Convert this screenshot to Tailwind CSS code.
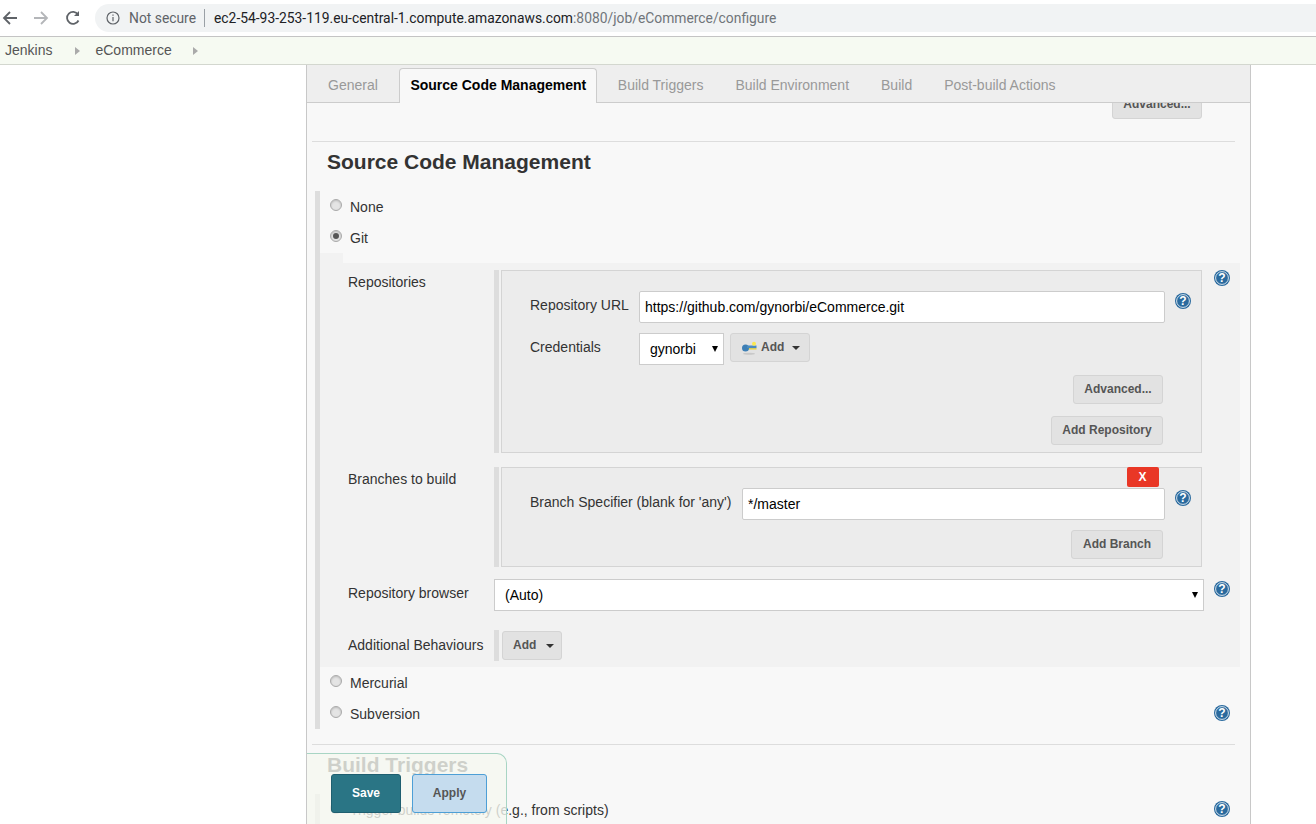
<!DOCTYPE html>
<html lang="en">

<head>
    <meta charset="UTF-8">
    <meta name="viewport" content="width=device-width, initial-scale=1.0">
    <title>eCommerce Config [Jenkins]</title>
    <script src="https://cdn.jsdelivr.net/npm/@tailwindcss/browser@4"></script>
</head>

<body class="h-[824px] overflow-hidden bg-white font-['Liberation_Sans',Arial,sans-serif] text-[14px] text-[#333]">
<!-- browser toolbar -->
<div class="flex h-[37px] items-center border-b border-[#c4c4c4] bg-white">
    <svg class="ml-[2px] h-4 w-4" viewBox="0 0 16 16" fill="none" stroke="#5f6368" stroke-width="1.8"><path d="M15 8H2M8 2L2 8l6 6"/></svg>
    <svg class="ml-[15px] h-4 w-4" viewBox="0 0 16 16" fill="none" stroke="#b4b6b9" stroke-width="1.8"><path d="M1 8h13M8 2l6 6-6 6"/></svg>
    <svg class="ml-[16px] h-4 w-4" viewBox="0 0 16 16" fill="none" stroke="#5f6368" stroke-width="1.8"><path d="M13.5 10.5A6 6 0 1 1 13 4.5"/><path d="M14 1v5H9" fill="#5f6368" stroke="none"/></svg>
    <div class="ml-[14px] flex h-[28px] flex-1 items-center rounded-l-[14px] bg-[#f1f3f4] pl-[11px] font-['Roboto',sans-serif] text-[13.85px]">
        <svg class="h-[14px] w-[14px]" viewBox="0 0 14 14" fill="none" stroke="#5f6368" stroke-width="1.2"><circle cx="7" cy="7" r="6"/><path d="M7 6v4.2M7 3.6v1.2"/></svg>
        <span class="ml-[9px] text-[#5f6368]">Not secure</span>
        <span class="ml-[8px] h-[18px] w-px bg-[#9aa0a6]"></span>
        <span class="ml-[9px] text-[#202124]">ec2-54-93-253-119.eu-central-1.compute.amazonaws.com<span class="text-[#70757a]">:8080/job/eCommerce/configure</span></span>
    </div>
</div>

<!-- breadcrumbs -->
<div class="flex h-[28px] items-center border-b border-[#d3d7cf] bg-[#f6faf2] pl-[5px] text-[#555]">
    <span>Jenkins</span>
    <span class="ml-[23px] h-0 w-0 border-y-[4px] border-l-[5px] border-y-transparent border-l-[#aaa]"></span>
    <span class="ml-[15px]">eCommerce</span>
    <span class="ml-[21px] h-0 w-0 border-y-[4px] border-l-[5px] border-y-transparent border-l-[#aaa]"></span>
</div>

<!-- config panel -->
<div class="relative ml-[306px] h-[759px] w-[945px] overflow-hidden border-x border-[#c8c8c8] bg-[#f8f8f8]">
    <!-- tabs -->
    <div class="relative z-10 flex h-[38px] items-end border-b border-[#ccc] bg-[#eee] text-[#999]">
        <span class="flex h-[34px] items-center px-[21px] pt-px">General</span>
        <span class="-mb-px flex h-[35px] w-[198px] items-center justify-center rounded-t-[4px] border border-b-0 border-[#ccc] bg-[#f8f8f8] pb-[2px] pl-px font-bold text-black">Source Code Management</span>
        <span class="flex h-[34px] items-center pl-[21px] pr-[16px] pt-px">Build Triggers</span>
        <span class="flex h-[34px] items-center px-[16px] pt-px">Build Environment</span>
        <span class="flex h-[34px] items-center px-[16px] pt-px">Build</span>
        <span class="flex h-[34px] items-center px-[16px] pt-px">Post-build Actions</span>
    </div>

    <!-- scrolled content -->
    <div class="pl-[5px] pr-[10px]">
        <div class="-mt-[13px] flex justify-end pr-[38px]">
            <button class="h-[29px] w-[90px] rounded-[3px] border border-[#d4d4d4] bg-[#e2e2e2] pb-[2px] text-[12px] font-bold text-[#555]">Advanced...</button>
        </div>
        <div class="mr-[5px] mt-[22px] border-t border-[#ddd]"></div>
        <h2 class="ml-[15px] mt-[9px] h-[40px] text-[21px] font-bold leading-[21px] text-[#333]">Source Code Management</h2>

        <!-- scm radio block -->
        <div class="ml-[3px] border-l-[5px] border-[#ddd]">
            <div class="flex h-[31px] items-center pl-[10px] pt-[2px]">
                <span class="-mt-[5px] h-[12px] w-[12px] rounded-full border border-[#aaa] bg-[#e4e4e4] shadow-[inset_0_1px_2px_#bbb]"></span>
                <span class="ml-[8px]">None</span>
            </div>
            <div class="flex h-[31px] items-center pl-[10px] pt-[2px]">
                <span class="-mt-[5px] flex h-[12px] w-[12px] items-center justify-center rounded-full border border-[#aaa] bg-[#e4e4e4] shadow-[inset_0_1px_2px_#bbb]"><span class="h-[6px] w-[6px] rounded-full bg-[#555]"></span></span>
                <span class="ml-[8px]">Git</span>
            </div>
            <div class="h-[10px] w-[23px] bg-[#f2f2f2]"></div>

            <!-- git settings -->
            <div class="bg-[#f2f2f2] pb-[6px] pl-[28px] pr-[10px] pt-[7px]">
                <!-- repositories -->
                <div class="flex">
                    <span class="w-[146px] pt-[2px]">Repositories</span>
                    <div class="flex flex-1 items-start">
                        <div class="h-[183px] w-[5px] bg-[#ddd]"></div>
                        <div class="ml-[2px] h-[183px] flex-1 border border-[#d4d4d4] bg-[#ececec] pl-[28px] pr-[10px] pt-[20px]">
                            <div class="flex items-center">
                                <span class="-mt-[4px] w-[109px]">Repository URL</span>
                                <input class="h-[32px] flex-1 rounded-[2px] border border-[#ccc] bg-white pl-[5px] text-black" value="https://github.com/gynorbi/eCommerce.git">
                                <svg class="-mt-[12px] ml-[10px] h-4 w-4" viewBox="0 0 16 16"><circle cx="8" cy="8" r="8" fill="#2a6a9e"/><circle cx="8" cy="8" r="6.4" fill="none" stroke="#fff" stroke-width=".8"/><text x="8" y="12.2" text-anchor="middle" font-size="12" font-weight="bold" fill="#fff" font-family="Liberation Sans">?</text></svg>
                            </div>
                            <div class="mt-[10px] flex items-start">
                                <span class="w-[109px] pt-[4px]">Credentials</span>
                                <div class="relative h-[32px] w-[85px]">
                                    <select class="h-[32px] w-[85px] appearance-none border border-[#ccc] bg-white pl-[10px] text-black"><option>gynorbi</option></select>
                                    <span class="absolute right-[6px] top-[13px] h-0 w-0 border-x-[3.5px] border-t-[6px] border-x-transparent border-t-black"></span>
                                </div>
                                <button class="ml-[6px] flex h-[29px] w-[80px] items-center rounded-[3px] border border-[#d4d4d4] bg-[#e2e2e2] pb-[2px] pl-[11px] text-[12px] font-bold text-[#555]">
                                    <svg class="mt-[2px] h-[14px] w-[15px]" viewBox="0 0 15 14"><ellipse cx="7" cy="12.7" rx="6" ry="1" fill="#c8c8c8"/><path d="M5 7h9.5v1.6H5z" fill="#e8d44d"/><circle cx="3.5" cy="7" r="3.5" fill="#3d7fb5"/><path d="M5 4.5h9.5v2.6H5z" fill="#4a8cc0"/><circle cx="12" cy="2.8" r="2" fill="#fbe94f"/></svg>
                                    <span class="ml-[4px]">Add</span>
                                    <span class="ml-[8px] mt-[2px] h-0 w-0 border-x-[4px] border-t-[4px] border-x-transparent border-t-[#333]"></span>
                                </button>
                            </div>
                            <div class="mr-[28px] mt-[10px] flex justify-end">
                                <button class="h-[29px] w-[90px] rounded-[3px] border border-[#d4d4d4] bg-[#e2e2e2] pb-[2px] text-[12px] font-bold text-[#555]">Advanced...</button>
                            </div>
                            <div class="mr-[28px] mt-[12px] flex justify-end">
                                <button class="h-[29px] w-[112px] rounded-[3px] border border-[#d4d4d4] bg-[#e2e2e2] pb-[2px] text-[12px] font-bold text-[#555]">Add Repository</button>
                            </div>
                        </div>
                        <svg class="ml-[12px] h-4 w-4" viewBox="0 0 16 16"><circle cx="8" cy="8" r="8" fill="#2a6a9e"/><circle cx="8" cy="8" r="6.4" fill="none" stroke="#fff" stroke-width=".8"/><text x="8" y="12.2" text-anchor="middle" font-size="12" font-weight="bold" fill="#fff" font-family="Liberation Sans">?</text></svg>
                    </div>
                </div>

                <!-- branches -->
                <div class="mt-[14px] flex pr-[28px]">
                    <span class="w-[146px] pt-[2px]">Branches to build</span>
                    <div class="h-[100px] w-[5px] bg-[#ddd]"></div>
                    <div class="relative ml-[2px] h-[100px] flex-1 border border-[#d4d4d4] bg-[#ececec] pl-[28px] pr-[10px] pt-[20px]">
                        <button class="absolute right-[42px] top-[-1px] h-[20px] w-[32px] rounded-[2px] bg-[#e93726] pr-px text-[12px] font-bold text-white">X</button>
                        <div class="flex items-center">
                            <span class="-mt-[4px] w-[212px]">Branch Specifier (blank for 'any')</span>
                            <input class="h-[32px] flex-1 rounded-[2px] border border-[#ccc] bg-white pl-[5px] text-black" value="*/master">
                            <svg class="-mt-[12px] ml-[10px] h-4 w-4" viewBox="0 0 16 16"><circle cx="8" cy="8" r="8" fill="#2a6a9e"/><circle cx="8" cy="8" r="6.4" fill="none" stroke="#fff" stroke-width=".8"/><text x="8" y="12.2" text-anchor="middle" font-size="12" font-weight="bold" fill="#fff" font-family="Liberation Sans">?</text></svg>
                        </div>
                        <div class="mr-[28px] mt-[10px] flex justify-end">
                            <button class="h-[29px] w-[92px] rounded-[3px] border border-[#d4d4d4] bg-[#e2e2e2] pb-[2px] text-[12px] font-bold text-[#555]">Add Branch</button>
                        </div>
                    </div>
                </div>

                <!-- repository browser -->
                <div class="mt-[12px] flex items-start">
                    <span class="w-[146px] pt-[4px]">Repository browser</span>
                    <div class="relative h-[32px] w-[710px]">
                        <select class="h-[32px] w-[710px] appearance-none border border-[#ccc] bg-white pl-[10px] text-black"><option>(Auto)</option></select>
                        <span class="absolute right-[6px] top-[13px] h-0 w-0 border-x-[3.5px] border-t-[6px] border-x-transparent border-t-black"></span>
                    </div>
                    <svg class="ml-[10px] mt-[2px] h-4 w-4" viewBox="0 0 16 16"><circle cx="8" cy="8" r="8" fill="#2a6a9e"/><circle cx="8" cy="8" r="6.4" fill="none" stroke="#fff" stroke-width=".8"/><text x="8" y="12.2" text-anchor="middle" font-size="12" font-weight="bold" fill="#fff" font-family="Liberation Sans">?</text></svg>
                </div>

                <!-- additional behaviours -->
                <div class="mt-[19px] flex items-center">
                    <span class="w-[146px]">Additional Behaviours</span>
                    <div class="h-[31px] w-[5px] bg-[#ddd]"></div>
                    <button class="ml-[3px] flex h-[29px] w-[60px] items-center rounded-[3px] border border-[#d4d4d4] bg-[#e2e2e2] pb-[2px] pl-[10px] text-[12px] font-bold text-[#555]">
                        <span>Add</span>
                        <span class="ml-[10px] mt-[2px] h-0 w-0 border-x-[4px] border-t-[4px] border-x-transparent border-t-[#333]"></span>
                    </button>
                </div>
            </div>

            <div class="flex h-[31px] items-center pl-[10px] pt-[2px]">
                <span class="-mt-[5px] h-[12px] w-[12px] rounded-full border border-[#aaa] bg-[#e4e4e4] shadow-[inset_0_1px_2px_#bbb]"></span>
                <span class="ml-[8px]">Mercurial</span>
            </div>
            <div class="flex h-[31px] items-center pl-[10px] pr-[10px] pt-[2px]">
                <span class="-mt-[5px] h-[12px] w-[12px] rounded-full border border-[#aaa] bg-[#e4e4e4] shadow-[inset_0_1px_2px_#bbb]"></span>
                <span class="ml-[8px] flex-1">Subversion</span>
                <svg class="-mt-[4px] h-4 w-4" viewBox="0 0 16 16"><circle cx="8" cy="8" r="8" fill="#2a6a9e"/><circle cx="8" cy="8" r="6.4" fill="none" stroke="#fff" stroke-width=".8"/><text x="8" y="12.2" text-anchor="middle" font-size="12" font-weight="bold" fill="#fff" font-family="Liberation Sans">?</text></svg>
            </div>
        </div>

        <div class="mr-[5px] mt-[15px] border-t border-[#ddd]"></div>
        <h2 class="ml-[15px] mt-[9px] h-[40px] text-[21px] font-bold leading-[21px] text-[#333]">Build Triggers</h2>
        <div class="ml-[3px] border-l-[5px] border-[#ddd]">
            <div class="flex h-[31px] items-center pl-[10px] pr-[10px] pt-[2px]">
                <span class="-mt-[5px] h-[12px] w-[12px] rounded-full border border-[#aaa] bg-[#e4e4e4]"></span>
                <span class="ml-[8px] flex-1">Trigger builds remotely (e.g., from scripts)</span>
                <svg class="-mt-[4px] h-4 w-4" viewBox="0 0 16 16"><circle cx="8" cy="8" r="8" fill="#2a6a9e"/><circle cx="8" cy="8" r="6.4" fill="none" stroke="#fff" stroke-width=".8"/><text x="8" y="12.2" text-anchor="middle" font-size="12" font-weight="bold" fill="#fff" font-family="Liberation Sans">?</text></svg>
            </div>
        </div>
    </div>

    <!-- sticky save bar -->
    <div class="absolute bottom-0 left-0 z-10 flex h-[71px] w-[200px] items-start rounded-tr-[10px] border-r border-t border-[#a8d5c4] bg-[#f5f8f0]/80 pl-[24px] pt-[20px]">
        <button class="h-[39px] w-[70px] rounded-[3px] border border-[#1f5f70] bg-[#2a7585] pb-[2px] text-[12px] font-bold text-white">Save</button>
        <button class="ml-[11px] h-[39px] w-[75px] rounded-[3px] border border-[#4d9fd6] bg-[#c5dcee] pb-[2px] text-[12px] font-bold text-[#555]">Apply</button>
    </div>
</div>
</body>

</html>
